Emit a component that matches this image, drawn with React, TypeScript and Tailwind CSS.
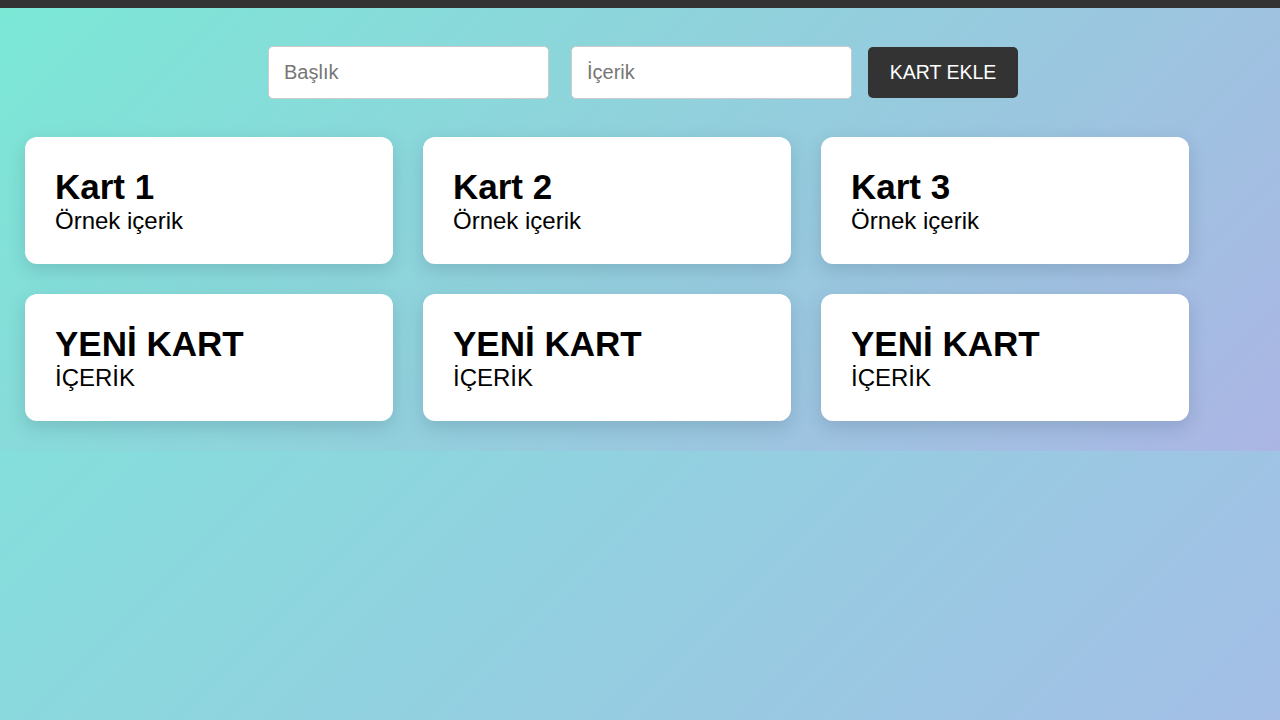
import { useState } from "react";

type Card = { id: number; title: string; body: string };

const initialCards: Card[] = [
  { id: 1, title: "Kart 1", body: "Örnek içerik" },
  { id: 2, title: "Kart 2", body: "Örnek içerik" },
  { id: 3, title: "Kart 3", body: "Örnek içerik" },
  { id: 4, title: "YENİ KART", body: "İÇERİK" },
  { id: 5, title: "YENİ KART", body: "İÇERİK" },
  { id: 6, title: "YENİ KART", body: "İÇERİK" },
];

export default function App() {
  const [cards, setCards] = useState<Card[]>(initialCards);
  const [title, setTitle] = useState("");
  const [body, setBody] = useState("");

  const addCard = () => {
    setCards((prev) => [
      ...prev,
      {
        id: prev.length + 1,
        title: (title || "Yeni kart").toLocaleUpperCase("tr-TR"),
        body: (body || "İçerik").toLocaleUpperCase("tr-TR"),
      },
    ]);
    setTitle("");
    setBody("");
  };

  return (
    <div className="min-h-screen bg-[linear-gradient(135deg,#7be8d8,#a4bee6)] font-['Liberation_Sans',Arial,sans-serif]">
      {/* Top strip */}
      <div className="h-2 bg-[#333333]" />

      <section className="bg-[linear-gradient(135deg,#7be8d6,#abb5e4)] pb-[30px]">
        {/* Form */}
        <div className="flex items-center justify-center pl-[6px] pt-[38px]">
          <input
            value={title}
            onChange={(e) => setTitle(e.target.value)}
            placeholder="Başlık"
            className="h-[53px] w-[281px] rounded-[5px] border border-[#cccccc] bg-white px-[15px] text-[20px] text-[#222] outline-none placeholder:text-[#767676]"
          />
          <input
            value={body}
            onChange={(e) => setBody(e.target.value)}
            placeholder="İçerik"
            className="ml-[22px] h-[53px] w-[281px] rounded-[5px] border border-[#cccccc] bg-white px-[15px] text-[20px] text-[#222] outline-none placeholder:text-[#767676]"
          />
          <button
            onClick={addCard}
            className="ml-4 h-[51px] w-[150px] rounded-[5px] bg-[#333333] text-[19.5px] text-white"
          >
            KART EKLE
          </button>
        </div>

        {/* Cards */}
        <div className="mt-[38px] grid grid-cols-[repeat(3,368px)] gap-[30px] pl-[25px]">
          {cards.map((c) => (
            <div
              key={c.id}
              className="h-[127px] rounded-xl bg-white px-[30px] pt-[31px] shadow-[0_6px_18px_rgba(40,60,90,0.18)]"
            >
              <h2 className="text-[35px] font-bold leading-[38px] text-black">{c.title}</h2>
              <p className="mt-[2px] text-[24px] leading-[26px] text-black">{c.body}</p>
            </div>
          ))}
        </div>
      </section>
    </div>
  );
}
